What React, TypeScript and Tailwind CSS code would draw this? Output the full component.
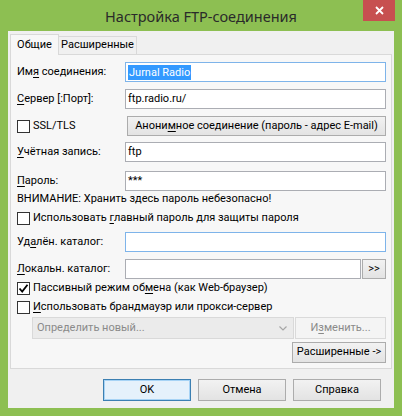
import React from 'react';

const font = { fontFamily: 'Roboto, "Noto Sans", sans-serif' };

const U: React.FC<{ children: React.ReactNode }> = ({ children }) => <span className="underline underline-offset-2">{children}</span>;

const Input: React.FC<{ value?: string; focus?: boolean; selected?: boolean; className?: string }> = ({ value, focus, selected, className }) => (
  <div
    className={`h-[20px] flex items-center bg-white border ${focus ? 'border-[#7eb4ea]' : 'border-[#abadb3]'} pl-[2px] overflow-hidden whitespace-nowrap ${className ?? 'flex-1'}`}
  >
    {selected ? <span className="bg-[#3399ff] text-white px-[1px] leading-[15px]">{value}</span> : <span>{value}</span>}
  </div>
);

const Checkbox: React.FC<{ checked?: boolean }> = ({ checked }) => (
  <div className="w-[13px] h-[13px] border border-[#333] bg-white flex items-center justify-center shrink-0">
    {checked && (
      <svg width="11" height="11" viewBox="0 0 11 11">
        <path d="M1.5 5.5 L4.2 8.5 L9.5 1.8" fill="none" stroke="#000" strokeWidth="1.8" />
      </svg>
    )}
  </div>
);

const Button: React.FC<{ children: React.ReactNode; className?: string; primary?: boolean; disabled?: boolean }> = ({ children, className, primary, disabled }) => (
  <div
    className={`flex items-center justify-center border ${
      disabled
        ? 'border-[#dadada] bg-[#f4f4f4] text-[#8a8a8a]'
        : primary
        ? 'border-[#3c7fb1] bg-[#e5f1fb] shadow-[inset_0_0_0_1px_#a7d3f5]'
        : 'border-[#acacac] bg-gradient-to-b from-[#f2f2f2] to-[#e3e3e3]'
    } ${className ?? ''}`}
  >
    <span className="whitespace-nowrap">{children}</span>
  </div>
);

const Label: React.FC<{ children: React.ReactNode }> = ({ children }) => <div className="w-[108px] shrink-0 whitespace-nowrap">{children}</div>;

export default function App() {
  return (
    <div className="w-[402px] h-[416px] bg-[#8dbf52] flex flex-col text-[11px] text-black" style={font}>
      <div className="h-[31px] relative flex items-center justify-center shrink-0">
        <span className="text-[14.5px] text-[#2a2a2a] mt-[3px]" style={{ fontFamily: '"Noto Sans", sans-serif' }}>
          Настройка FTP-соединения
        </span>
        <div className="absolute right-[7px] top-0 w-[32px] h-[21px] bg-[#c75050] flex items-center justify-center">
          <svg width="9" height="9" viewBox="0 0 9 9">
            <path d="M1 1 L8 8 M8 1 L1 8" stroke="#fff" strokeWidth="1.8" />
          </svg>
        </div>
      </div>
      <div className="mx-[8px] mb-[8px] flex-1 bg-[#f0f0f0] flex flex-col px-[2px] pt-[3px]">
        <div className="flex items-end h-[21px] relative z-10">
          <div className="h-[21px] w-[49px] bg-[#f7f7f7] border border-[#d9d9d9] border-b-0 flex items-center justify-center">Общие</div>
          <div className="h-[18px] w-[78px] bg-[#f0f0f0] border border-[#d9d9d9] border-l-0 border-b-0 flex items-center justify-center mb-[1px]">Расширенные</div>
        </div>
        <div className="border border-[#d9d9d9] bg-[#f7f7f7] -mt-[1px] pl-[6px] pr-[5px] pb-[5px] flex flex-col">
          <div className="mt-[7px] h-[20px] flex items-center">
            <Label>Им<U>я</U> соединения:</Label>
            <Input value="Jurnal Radio" focus selected />
          </div>
          <div className="mt-[7px] h-[20px] flex items-center">
            <Label><U>С</U>ервер [:Порт]:</Label>
            <Input value="ftp.radio.ru/" />
          </div>
          <div className="mt-[7px] h-[20px] flex items-center">
            <div className="w-[110px] flex items-center gap-[3px] shrink-0">
              <Checkbox />
              <span>SSL/TLS</span>
            </div>
            <Button className="flex-1 h-[20px]">Анони<U>м</U>ное соединение (пароль - адрес E-mail)</Button>
          </div>
          <div className="mt-[6px] h-[20px] flex items-center">
            <Label><U>У</U>чётная запись:</Label>
            <Input value="ftp" />
          </div>
          <div className="mt-[9px] h-[20px] flex items-center">
            <Label><U>П</U>ароль:</Label>
            <Input value="***" />
          </div>
          <div className="h-[16px] flex items-center">ВНИМАНИЕ: Хранить здесь пароль небезопасно!</div>
          <div className="mt-[1px] h-[20px] flex items-center gap-[3px]">
            <Checkbox />
            <span>Использовать <U>г</U>лавный пароль для защиты пароля</span>
          </div>
          <div className="mt-[4px] h-[20px] flex items-center">
            <Label>Уд<U>а</U>лён. каталог:</Label>
            <Input focus />
          </div>
          <div className="mt-[7px] h-[20px] flex items-center">
            <Label><U>Л</U>окальн. каталог:</Label>
            <Input />
            <Button className="w-[24px] h-[20px] ml-[1px]">&gt;&gt;</Button>
          </div>
          <div className="h-[19px] flex items-center gap-[3px]">
            <Checkbox checked />
            <span>Пассивный режим об<U>м</U>ена (как Web-браузер)</span>
          </div>
          <div className="h-[19px] flex items-center gap-[3px]">
            <Checkbox />
            <span><U>И</U>спользовать брандмауэр или прокси-сервер</span>
          </div>
          <div className="h-[22px] flex items-center pl-[15px]">
            <div className="flex-1 h-[22px] border border-[#d9d9d9] bg-[#ebebeb] text-[#8a8a8a] flex items-center pl-[4px] pr-[6px]">
              <span className="flex-1">Определить новый...</span>
              <svg width="8" height="5" viewBox="0 0 8 5">
                <path d="M0.5 0.5 L4 4 L7.5 0.5" fill="none" stroke="#a6a6a6" strokeWidth="1.2" />
              </svg>
            </div>
            <Button disabled className="w-[91px] h-[22px] ml-[1px]">И<U>з</U>менить...</Button>
          </div>
          <div className="mt-[3px] flex justify-end">
            <Button className="w-[94px] h-[21px]">Расширенные -&gt;</Button>
          </div>
        </div>
        <div className="flex justify-end gap-[7px] mt-[10px] pr-[11px]">
          <Button primary className="w-[88px] h-[22px]">OK</Button>
          <Button className="w-[88px] h-[22px]">Отмена</Button>
          <Button className="w-[88px] h-[22px]">Справка</Button>
        </div>
      </div>
    </div>
  );
}
